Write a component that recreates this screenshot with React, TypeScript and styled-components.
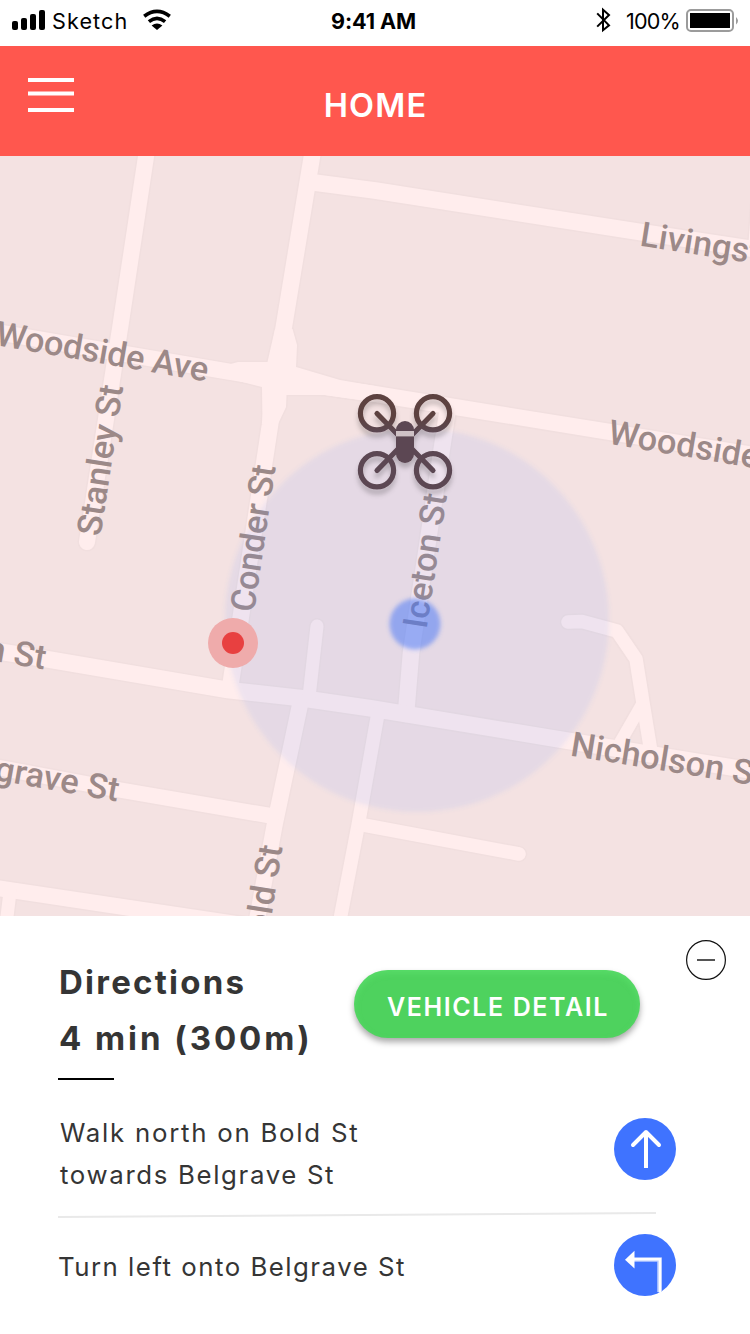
import React from "react";
import styled, { createGlobalStyle } from "styled-components";

const GlobalStyle = createGlobalStyle`
  *, *::before, *::after { box-sizing: border-box; }
  body { margin: 0; background: #ffffff; }
  h1, h2, p { margin: 0; }
`;

const Screen = styled.div`
  display: flex;
  flex-direction: column;
  width: 750px;
  height: 1334px;
  overflow: hidden;
  background: #ffffff;
  font-family: Inter, "Liberation Sans", sans-serif;
`;

/* ---------- status bar ---------- */

const StatusBar = styled.div`
  display: grid;
  grid-template-columns: 1fr auto 1fr;
  height: 46px;
  padding: 0 11px 0 12px;
  color: #000000;
`;

const StatusGroup = styled.div<{ $end?: boolean }>`
  display: flex;
  align-items: flex-start;
  justify-content: ${(p) => (p.$end ? "flex-end" : "flex-start")};
`;

const StatusText = styled.span<{ $bold?: boolean; $spacing: number }>`
  font-size: 21.6px;
  font-weight: ${(p) => (p.$bold ? 700 : 400)};
  line-height: 43px;
  letter-spacing: ${(p) => p.$spacing}px;
  white-space: nowrap;
`;

const Clock = styled(StatusText)`
  margin: 0 3px 0 -1px;
`;

const StatusIcon = styled.svg<{ $left?: number; $right?: number }>`
  display: block;
  flex: none;
  margin-left: ${(p) => p.$left ?? 0}px;
  margin-right: ${(p) => p.$right ?? 0}px;
`;

/* ---------- app bar ---------- */

const AppBar = styled.header`
  display: grid;
  grid-template-columns: 1fr auto 1fr;
  height: 110px;
  padding: 0 28px;
  background: #ff574e;
`;

const MenuButton = styled.button`
  display: block;
  width: 46px;
  height: 34px;
  margin-top: 32px;
  padding: 0;
  border: 0;
  background: none;
`;

const MenuIcon = styled.svg`
  display: block;
`;

const AppTitle = styled.h1`
  padding-left: 1px;
  color: #ffffff;
  font-size: 32.5px;
  font-weight: 600;
  line-height: 120px;
  letter-spacing: 1.2px;
`;

/* ---------- map ---------- */

const MapView = styled.svg`
  display: block;
  flex: none;
  width: 750px;
  height: 760px;
  background: #f4e2e2;
`;

const StreetName = styled.text`
  fill: #9c8988;
  font-family: Roboto, sans-serif;
  font-size: 34.4px;
  font-weight: 500;
`;

type Road = { d: string; w: number };

const roads: Road[] = [
  { d: "M147 150 L121 322 L87 542", w: 16 },
  { d: "M313 150 L284 326 L276 372 L270 425 L230 688", w: 16.5 },
  { d: "M-10 331 L225 371 L290 382 L375 394 L610 432 L760 456", w: 16 },
  { d: "M314 182.5 L375 190.5 L640 232 L760 250", w: 16.5 },
  { d: "M758 195 L754 250", w: 12 },
  { d: "M448 408 L411 653 L406 714", w: 16.5 },
  { d: "M-10 650 L43 658.5 L228 690 L300 698 L372 708.5 L560 739.5 L760 772", w: 16.5 },
  { d: "M301 700 L275 823 L256 925", w: 16 },
  { d: "M378 713 L358 826 L339 925", w: 13.5 },
  { d: "M361 824.5 L519 854", w: 13.5 },
  { d: "M317 626 L309 697", w: 13 },
  { d: "M-10 766 L120 790 L272 816", w: 15.5 },
  { d: "M-10 887 L250 926", w: 16 },
  { d: "M10 892 L6 925", w: 13 },
  { d: "M568 622 L582 621.5 L617 631 L636 659 L643 703 L651 752", w: 13.5 },
  { d: "M641 706 L618 746", w: 12 },
];

const junction =
  "M275 329 L267.5 362 L238 362 L229 364.5 L219 376 L262 387 L262.5 423 L278 424 L286 407 L286.5 395 L325 395 L375 402 L375 386 L340 380 L296 367 L297 345 L292.5 329 Z";

type Label = {
  text: string;
  x: number;
  y: number;
  angle: number;
  end?: boolean;
  length?: number;
};

const labels: Label[] = [
  { text: "Livingstone Ave", x: 639, y: 245.5, angle: 9 },
  { text: "Woodside Ave", x: -5.5, y: 345, angle: 9.8, length: 215 },
  { text: "Woodside Ave", x: 607, y: 443.5, angle: 9.5 },
  { text: "Nicholson St", x: 569.5, y: 755.5, angle: 9.2 },
  { text: "Nicholson St", x: 44, y: 669.5, angle: 9.5, end: true },
  { text: "Belgrave St", x: 117, y: 801.5, angle: 10, end: true },
  { text: "Stanley St", x: 100.5, y: 537, angle: -81.4, length: 152 },
  { text: "Conder St", x: 254, y: 613, angle: -81.6, length: 148 },
  { text: "Iceton St", x: 426.5, y: 629.5, angle: -81.3, length: 136 },
  { text: "Bold St", x: 282.5, y: 847, angle: -81, end: true },
];

const rotors = [
  [377, 413.3],
  [433, 413.3],
  [377, 470.3],
  [433, 470.3],
];

/* ---------- directions sheet ---------- */

const Sheet = styled.section`
  flex: 1;
  padding: 24px 24px 0 58px;
  background: #ffffff;
  color: #353535;
`;

const SheetHeader = styled.div`
  display: flex;
  align-items: flex-start;
`;

const Summary = styled.div`
  width: 296px;
  padding: 15px 0 0 1px;
`;

const SummaryLine = styled.h2<{ $spacing: number }>`
  font-size: 33px;
  font-weight: 700;
  line-height: 55.5px;
  letter-spacing: ${(p) => p.$spacing}px;
  white-space: nowrap;
`;

const DetailButton = styled.button`
  width: 286px;
  height: 68px;
  margin-top: 30px;
  padding: 6px 0 0 2px;
  border: 0;
  border-radius: 34px;
  background: #4ed25e;
  box-shadow:
    0 4px 6px rgba(0, 0, 0, 0.34),
    inset 0 3px 6px rgba(110, 240, 125, 0.35);
  color: #ffffff;
  font-family: inherit;
  font-size: 25px;
  font-weight: 600;
  letter-spacing: 1.6px;
  white-space: nowrap;
`;

const CollapseButton = styled.button`
  width: 40px;
  height: 40px;
  margin-left: auto;
  padding: 0;
  border: 0;
  background: none;
`;

const Rule = styled.div`
  width: 56px;
  height: 2px;
  margin-top: 12px;
  background: #000000;
`;

const Step = styled.div<{ $top: number; $indent?: number }>`
  display: flex;
  align-items: center;
  justify-content: space-between;
  margin-top: ${(p) => p.$top}px;
  padding: 0 50px 0 ${(p) => p.$indent ?? 0}px;
`;

const StepText = styled.p<{ $drop?: number }>`
  padding-top: ${(p) => p.$drop ?? 0}px;
  font-size: 25.8px;
  font-weight: 400;
  line-height: 42px;
  white-space: nowrap;
`;

const StepLine = styled.span<{ $spacing: number }>`
  display: block;
  letter-spacing: ${(p) => p.$spacing}px;
`;

const StepIcon = styled.svg<{ $shift?: number }>`
  display: block;
  flex: none;
  width: 62px;
  height: 62px;
  margin-top: ${(p) => p.$shift ?? 0}px;
`;

const Divider = styled.div`
  width: 598px;
  height: 2px;
  margin-top: 18px;
  background: #e9e9e9;
  transform: rotate(-0.38deg);
`;

function StreetMap() {
  return (
    <MapView viewBox="0 156 750 760">
      <defs>
        <filter id="soft" x="-20%" y="-20%" width="140%" height="140%">
          <feGaussianBlur stdDeviation="2" />
        </filter>
        <filter id="droneShadow" x="-20%" y="-20%" width="140%" height="150%">
          <feDropShadow dx="0" dy="5" stdDeviation="2.5" floodColor="#000" floodOpacity="0.22" />
        </filter>
        <linearGradient id="droneFill" gradientUnits="userSpaceOnUse" x1="0" y1="418" x2="0" y2="432">
          <stop offset="0" stopColor="#5d4241" />
          <stop offset="1" stopColor="#5b4752" />
        </linearGradient>
      </defs>

      <g fill="none" stroke="#f1dfdf" strokeLinecap="round" strokeLinejoin="round">
        {roads.map((r) => (
          <path key={r.d} d={r.d} strokeWidth={r.w + 3} />
        ))}
        <path d={junction} strokeWidth={3} />
      </g>
      <g fill="none" stroke="#ffeded" strokeLinecap="round" strokeLinejoin="round">
        {roads.map((r) => (
          <path key={r.d} d={r.d} strokeWidth={r.w} />
        ))}
      </g>
      <path d={junction} fill="#ffeded" />

      {labels.map((l) => (
        <StreetName
          key={`${l.text}-${l.x}`}
          transform={`translate(${l.x} ${l.y}) rotate(${l.angle})`}
          textAnchor={l.end ? "end" : "start"}
          textLength={l.length}
        >
          {l.text}
        </StreetName>
      ))}

      <circle cx="417" cy="620" r="192" fill="rgb(84,136,255)" fillOpacity="0.1" filter="url(#soft)" />
      <circle cx="415" cy="624" r="25.5" fill="#3f73f8" fillOpacity="0.5" filter="url(#soft)" />

      <circle cx="233" cy="643" r="25" fill="#efabab" />
      <circle cx="233" cy="643" r="11" fill="#e84040" />

      <g filter="url(#droneShadow)">
        <g fill="none" stroke="url(#droneFill)" strokeWidth="5.2">
          {rotors.map(([x, y]) => (
            <circle key={`${x}-${y}`} cx={x} cy={y} r="16.6" />
          ))}
          <path
            strokeLinecap="round"
            d="M377 413.5 L399 436 M433 413.5 L411 436 M377 470.5 L399 448 M433 470.5 L411 448"
          />
        </g>
        <rect x="396" y="421" width="18" height="42" rx="9" fill="#5b4752" />
        <rect x="396" y="431" width="18" height="5.4" fill="#cfc2c6" />
      </g>
    </MapView>
  );
}

export default function App() {
  return (
    <>
      <GlobalStyle />
      <Screen>
        <StatusBar>
          <StatusGroup>
            <StatusIcon width="33" height="30" viewBox="0 0 33 30" $right={7}>
              <rect x="0" y="21" width="6" height="9" rx="2" />
              <rect x="9" y="18" width="6" height="12" rx="2" />
              <rect x="18" y="14" width="6" height="16" rx="2" />
              <rect x="27" y="10" width="6" height="20" rx="2" />
            </StatusIcon>
            <StatusText $spacing={1.1}>Sketch</StatusText>
            <StatusIcon width="28" height="32" viewBox="143 0 28 32" $left={15}>
              <path d="M157 30 L151.6 25.4 Q157 21.6 162.4 25.4 Z" />
              <path
                fill="none"
                stroke="#000"
                strokeWidth="3.6"
                d="M144.2 16.3 Q157 6.6 169.8 16.3 M148.9 21.7 Q157 15.2 165.1 21.7"
              />
            </StatusIcon>
          </StatusGroup>
          <Clock $bold $spacing={-0.1}>9:41 AM</Clock>
          <StatusGroup $end>
            <StatusIcon width="16" height="34" viewBox="596 0 16 34" $right={14}>
              <path
                fill="none"
                stroke="#000"
                strokeWidth="2"
                d="M597.2 13.4 L609 25.4 L603 30.2 V9.8 L609 15 L597.2 26.6"
              />
            </StatusIcon>
            <StatusText $spacing={-0.8}>100%</StatusText>
            <StatusIcon width="53" height="34" viewBox="686 0 53 34" $left={6}>
              <rect x="687" y="10" width="46" height="21" rx="4" fill="#fff" stroke="#9b9b9b" strokeWidth="2" />
              <rect x="690" y="13" width="40" height="15" />
              <path d="M736 17 Q740 20.8 736 24.6 Z" fill="#9b9b9b" />
            </StatusIcon>
          </StatusGroup>
        </StatusBar>

        <AppBar>
          <MenuButton aria-label="Menu">
            <MenuIcon width="46" height="34" viewBox="0 0 46 34">
              <path d="M0 2 H46 M0 15.5 H46 M0 32 H46" stroke="#fff" strokeWidth="4" />
            </MenuIcon>
          </MenuButton>
          <AppTitle>HOME</AppTitle>
        </AppBar>

        <StreetMap />

        <Sheet>
          <SheetHeader>
            <Summary>
              <SummaryLine $spacing={2.25}>Directions</SummaryLine>
              <SummaryLine $spacing={2.95}>4 min (300m)</SummaryLine>
            </Summary>
            <DetailButton>VEHICLE DETAIL</DetailButton>
            <CollapseButton aria-label="Collapse">
              <MenuIcon width="40" height="40" viewBox="0 0 40 40">
                <circle cx="20" cy="20" r="19.4" fill="none" stroke="#111" strokeWidth="1.2" />
                <path d="M11 20 H29" stroke="#555" strokeWidth="2" />
              </MenuIcon>
            </CollapseButton>
          </SheetHeader>
          <Rule />

          <Step $top={32} $indent={2}>
            <StepText>
              <StepLine $spacing={1.75}>Walk north on Bold St</StepLine>
              <StepLine $spacing={1.65}>towards Belgrave St</StepLine>
            </StepText>
            <StepIcon viewBox="614 1118 62 62" $shift={-10}>
              <circle cx="645" cy="1149" r="31" fill="#3f73ff" />
              <path d="M646 1132 V1168" stroke="#fff" strokeWidth="4" />
              <path
                d="M633 1145 L646 1132 L659 1145"
                fill="none"
                stroke="#fff"
                strokeWidth="4"
                strokeLinecap="round"
                strokeLinejoin="round"
              />
            </StepIcon>
          </Step>
          <Divider />
          <Step $top={18}>
            <StepText $drop={4}>
              <StepLine $spacing={1.5}>Turn left onto Belgrave St</StepLine>
            </StepText>
            <StepIcon viewBox="614 1234 62 62">
              <circle cx="645" cy="1265" r="31" fill="#3f73ff" />
              <path d="M633 1259.5 H659.5 V1292" fill="none" stroke="#b9ccff" strokeWidth="4.6" />
              <path d="M633 1259.3 H660 V1292.4" fill="none" stroke="#fff" strokeWidth="2.6" />
              <path d="M625 1259.8 L634.5 1250.8 V1268.4 Z" fill="#fff" />
            </StepIcon>
          </Step>
        </Sheet>
      </Screen>
    </>
  );
}
